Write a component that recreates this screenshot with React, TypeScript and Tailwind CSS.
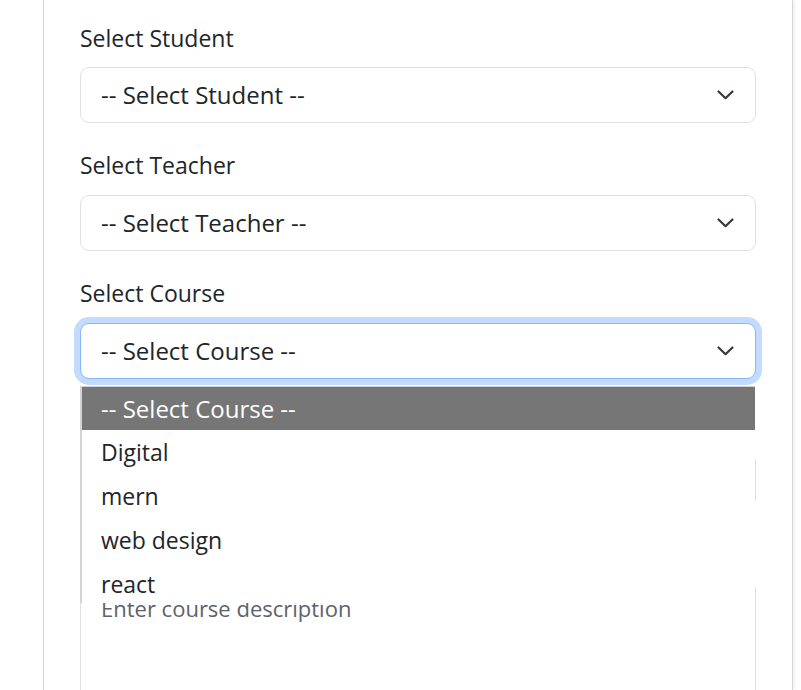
import React from "react";

function Chevron() {
  return (
    <svg
      className="absolute right-[21px] top-1/2 -translate-y-1/2"
      width="17"
      height="10"
      viewBox="0 0 17 10"
    >
      <path d="M1.5 1.5L8.5 8.2L15.5 1.5" fill="none" stroke="#343a40" strokeWidth="2.2" strokeLinecap="round" strokeLinejoin="round" />
    </svg>
  );
}

function FakeSelect({ text, focused }: { text: string; focused?: boolean }) {
  return (
    <div
      className={
        focused
          ? "relative h-[56px] rounded-[9px] border border-[#86b7fe] bg-white pl-[20px] flex items-center shadow-[0_0_0_6px_rgba(13,110,253,0.25)]"
          : "relative h-[56px] rounded-[9px] border border-[#dee2e6] bg-white pl-[20px] flex items-center"
      }
    >
      <span className="text-[24px] leading-[36px] text-[#212529]">{text}</span>
      <Chevron />
    </div>
  );
}

export default function App() {
  const options = ["Digital", "mern", "web design", "react"];
  return (
    <div
      className="min-h-[690px] bg-white overflow-hidden"
      style={{ fontFamily: '"Open Sans", "Noto Sans", "Liberation Sans", sans-serif' }}
    >
      <div className="relative ml-[43px] w-[750px] h-[690px] border-x border-[#d6d6d6] shadow-[2px_0_3px_rgba(0,0,0,0.06)] px-[36px] pt-[20px]">
        <div className="flex flex-col">
          <label className="text-[23px] leading-[36px] text-[#212529] mb-[11px]">Select Student</label>
          <FakeSelect text="-- Select Student --" />
          <label className="text-[23px] leading-[36px] text-[#212529] mb-[12px] mt-[24px]">Select Teacher</label>
          <FakeSelect text="-- Select Teacher --" />
          <label className="text-[23px] leading-[36px] text-[#212529] mb-[12px] mt-[24px]">Select Course</label>
          <FakeSelect text="-- Select Course --" focused />
          <label className="text-[23px] leading-[36px] text-[#212529] mb-[12px] mt-[25px]">Course Name</label>
          <div className="h-[56px] rounded-[9px] border border-[#dee2e6] bg-white pl-[20px] flex items-center">
            <span className="text-[22px] leading-[36px] text-[#6c757d]">Enter course name</span>
          </div>
          <label className="text-[23px] leading-[36px] text-[#212529] mb-[12px] mt-[24px]">Description</label>
          <div className="h-[160px] rounded-[9px] border border-[#dee2e6] bg-white pl-[20px] pt-[9px]">
            <span className="text-[22px] leading-[36px] text-[#5c636a]">Enter course description</span>
          </div>
        </div>

        {/* native dropdown popup */}
        <div className="absolute left-[36px] top-[386px] w-[675px] h-[217px] bg-white border-l-2 border-[#d4d4d4] overflow-hidden">
          <div className="h-[44px] bg-[#767676] border-t border-[#d0d0d0] flex items-center pl-[19px]">
            <span className="text-[24px] leading-[36px] text-white">-- Select Course --</span>
          </div>
          {options.map((o) => (
            <div key={o} className="h-[44px] flex items-center pl-[19px]">
              <span className="text-[23px] leading-[36px] text-[#212529]">{o}</span>
            </div>
          ))}
        </div>
      </div>
    </div>
  );
}
